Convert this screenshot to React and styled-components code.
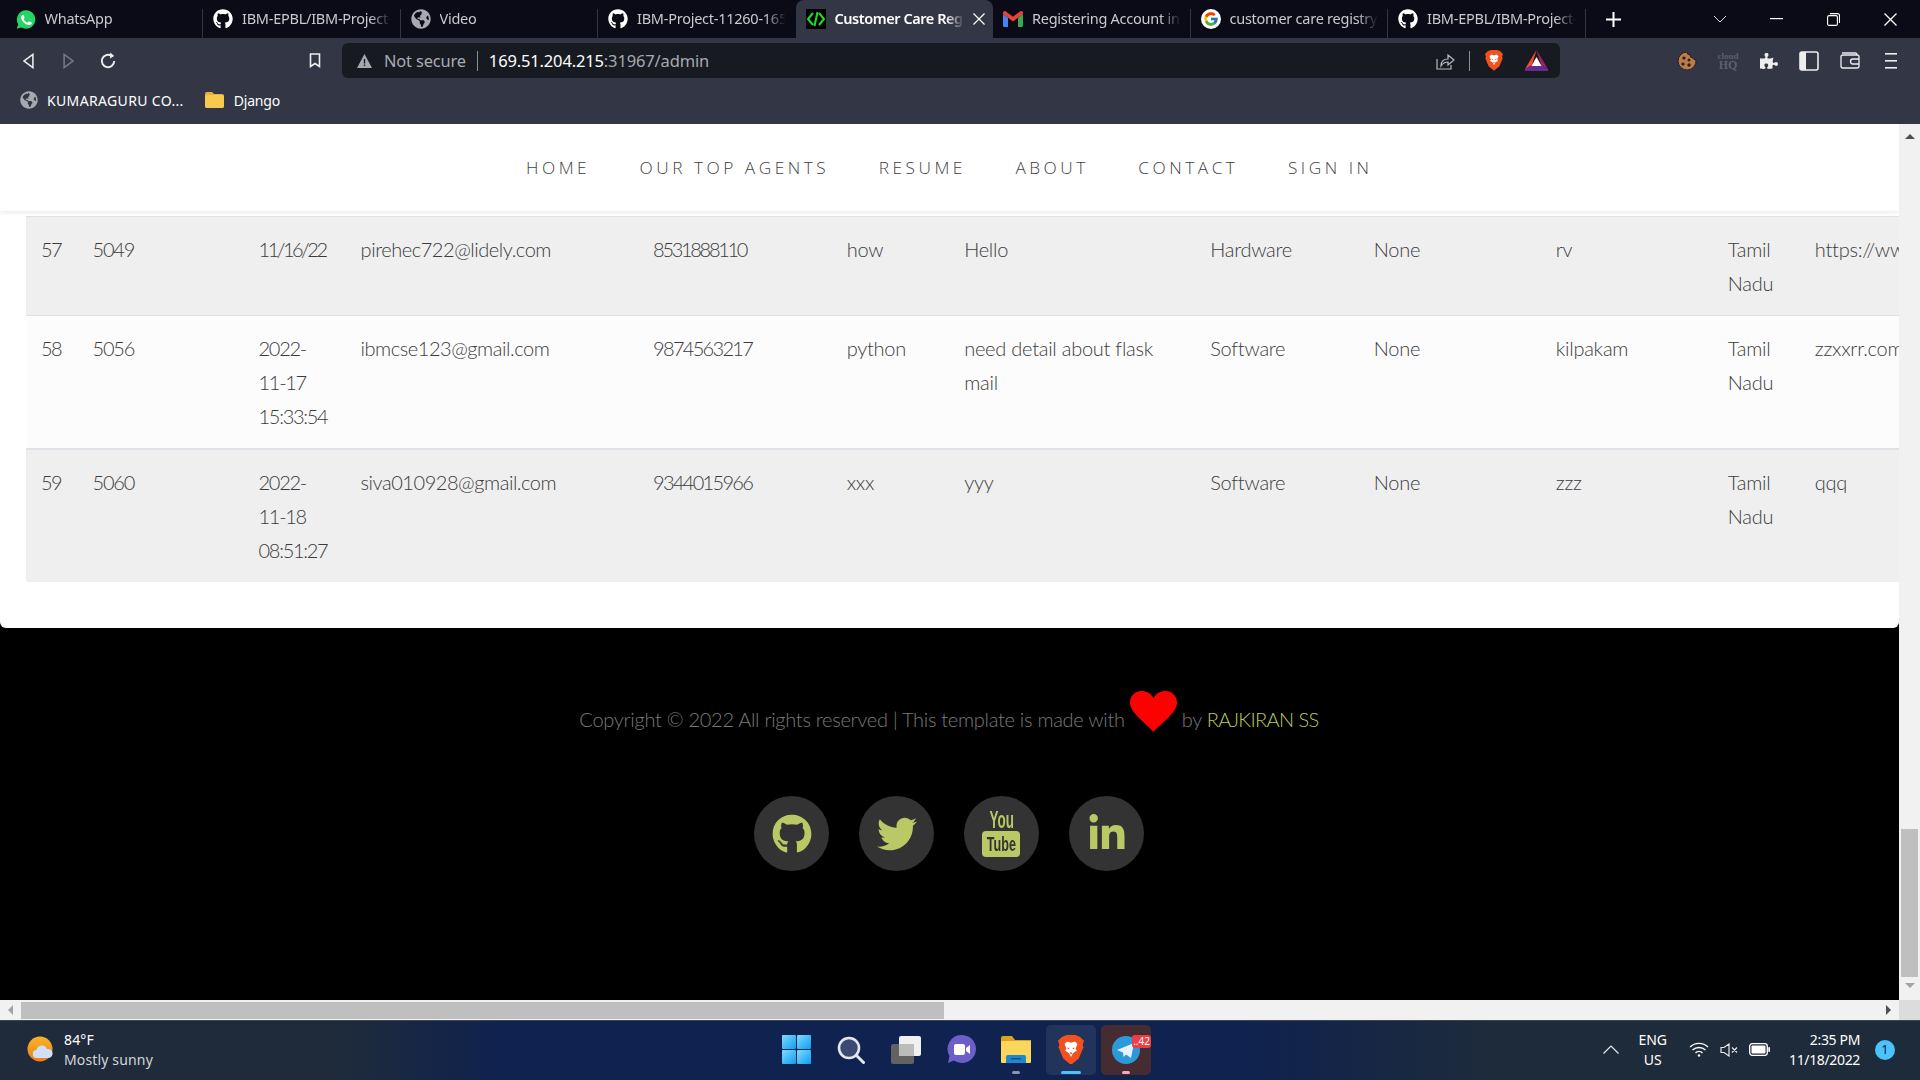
import React from "react";
import styled, { createGlobalStyle } from "styled-components";
import { FaGithub, FaGlobeAmericas, FaTwitter, FaLinkedinIn, FaPuzzlePiece } from "react-icons/fa";
import { FcGoogle } from "react-icons/fc";

const Global = createGlobalStyle`
  html, body { margin: 0; padding: 0; width: 1920px; height: 1080px; overflow: hidden; background: #000; }
  * { box-sizing: border-box; }
`;

const CHROME_FONT = `"Noto Sans", "Open Sans", sans-serif`;
const PAGE_FONT = `Lato, "Open Sans", sans-serif`;

const Screen = styled.div`
  width: 1920px; height: 1080px; display: flex; flex-direction: column; font-family: ${CHROME_FONT};
`;

const TabStrip = styled.div`
  height: 38px; flex: none; display: flex; align-items: stretch; padding-left: 5.5px; background: #0b0b17; color: #c4c7cc;
`;
const Tab = styled.div`
  position: relative; flex: 0 0 197.5px; width: 197.5px; display: flex; align-items: center; gap: 9px; padding: 0 10px;
  font-size: 14.5px; letter-spacing: ${p => (p.$active ? -0.45 : -0.25)}px; color: ${p => (p.$active ? "#fff" : "#c8cace")}; font-weight: ${p => (p.$active ? 600 : 400)};
  background: ${p => (p.$active ? "#333645" : "transparent")};
  border-radius: ${p => (p.$active ? "8px 8px 0 0" : "0")};
  &::after {
    content: ""; position: absolute; right: 0; top: 9px; bottom: 0; width: 1px;
    background: ${p => (p.$sep ? "#34353f" : "transparent")};
  }
`;
const TabIcon = styled.span`
  flex: none; width: 20px; height: 20px; display: flex; align-items: center; justify-content: center; font-size: 20px;
  color: ${p => p.$color || "#fff"};
`;
const TabTitle = styled.span`
  flex: 1; min-width: 0; overflow: hidden; white-space: nowrap; padding-bottom: 2px;
  mask-image: linear-gradient(to right, #000 86%, transparent 100%);
`;
const TabClose = styled.span`
  flex: none; width: 12px; margin-right: -2px; display: flex;
`;
const NewTab = styled.div`
  margin-left: 20px; width: 16px; display: flex; align-items: center;
`;
const WindowControls = styled.div`
  margin-left: auto; padding-right: 1px; display: flex; align-items: center; color: #fff;
`;
const WinBtn = styled.div`
  width: ${p => p.$w || 57}px; display: flex; justify-content: center;
`;

const Toolbar = styled.div`
  height: 42px; flex: none; padding: 3px 0 0 8px; display: flex; align-items: center; background: #333645;
`;
const ToolBtn = styled.div`
  flex: none; width: ${p => p.$w || 40}px; display: flex; align-items: center; justify-content: center;
  margin-left: ${p => p.$ml || 0}px; color: #eee;
`;
const AddressBar = styled.div`
  flex: none; width: 1218px; height: 35px; margin-left: 7px; border-radius: 6px; background: #181a21;
  display: flex; align-items: center; padding-left: 15px; font-size: 16.5px; letter-spacing: -0.15px; color: #a6a9b0;
`;
const NotSecure = styled.span`
  margin-left: 12px; color: #a9acb2; font-size: 16.4px;
`;
const AddrSep = styled.span`
  width: 1px; height: 20px; background: #8c8f96; margin: 0 ${p => p.$m || 11}px;
`;
const Host = styled.span`
  color: #fff;
`;
const AddrRight = styled.div`
  margin-left: auto; display: flex; align-items: center; padding-right: 12px;
`;

const Bookmarks = styled.div`
  height: 44px; flex: none; padding: 0 0 4px 19px; display: flex; align-items: center; background: #333645;
  font-size: 14px; color: #fff;
`;
const Bookmark = styled.div`
  display: flex; align-items: center; gap: ${p => p.$gap}px; margin-right: 21px; letter-spacing: ${p => p.$ls}px;
`;

const Viewport = styled.div`
  height: 876px; flex: none; display: flex;
`;
const Page = styled.div`
  width: 1899px; flex: none; display: flex; flex-direction: column; background: #000; font-family: ${PAGE_FONT}; font-weight: 300;
  overflow: hidden;
`;
const Nav = styled.nav`
  position: relative; z-index: 2; flex: none; height: 87px; background: #fff; display: flex; align-items: center;
  padding: 0 0 0 526px; box-shadow: 0 1px 5px rgba(0,0,0,.1);
`;
const NavLink = styled.a`
  font-family: "Open Sans", sans-serif; font-weight: 300; font-size: 17.3px; letter-spacing: 3.5px; color: #3f3f3f; white-space: nowrap;
  margin-right: ${p => p.$mr}px;
`;
const Card = styled.section`
  flex: none; height: 417px; background: #fff; padding: 5px 0 45px 26px; border-radius: 0 0 6px 6px; overflow: hidden;
`;
const TableWrap = styled.div`
  overflow: hidden; width: 100%;
`;
const Table = styled.table`
  table-layout: fixed; width: 2074px; border-collapse: separate; border-spacing: 0; color: #3b3b3b;
  font-size: 20px; line-height: 33.8px;
`;
const Column = styled.col`
  width: ${p => p.$w}px;
`;
const Cell = styled.td`
  vertical-align: top; padding: 16px 15px 14.5px; overflow: hidden; letter-spacing: ${p => p.$ls}px;
  background: ${p => (p.$odd ? "#efeff0" : "#fcfcfc")};
  border-top: ${p => (p.$thick ? 2 : 1)}px solid #dee2e6;
`;

const Footer = styled.footer`
  flex: 1; background: #000; display: flex; flex-direction: column; align-items: center; padding: 63px 1px 0 0;
`;
const Copy = styled.div`
  display: flex; align-items: flex-start; font-size: 20px; line-height: 34px; letter-spacing: -0.28px; color: #7a7a7a; white-space: pre;
`;
const CopyText = styled.span`
  margin-top: 11px;
`;
const Author = styled.a`
  color: #bccc58; letter-spacing: -0.6px;
`;
const Heart = styled.svg`
  width: 47px; height: 41px; margin: 0 5px; flex: none;
`;
const Socials = styled.div`
  display: flex; gap: 30px; margin-top: 60px;
`;
const Social = styled.a`
  width: 75px; height: 75px; border-radius: 50%; background: #333; color: #bac866; display: flex; align-items: center; justify-content: center;
  font-size: ${p => p.$size || 40}px;
`;
const YouTubeStack = styled.div`
  display: flex; flex-direction: column; align-items: center; gap: 2px; font-family: "Liberation Sans", sans-serif; font-weight: 700;
`;
const YouWord = styled.span`
  font-size: 24px; line-height: 18px; height: 18px; transform: scaleX(.56); letter-spacing: 0;
`;
const TubeBox = styled.span`
  width: 38px; height: 26px; border-radius: 4px; background: #bac866; color: #333; display: flex; align-items: center; justify-content: center;
`;
const TubeWord = styled.span`
  font-size: 21px; line-height: 26px; transform: scaleX(.6);
`;

const VScroll = styled.div`
  width: 21px; flex: none; background: #f1f1f1; display: flex; flex-direction: column; align-items: center; padding-top: 10px;
`;
const VThumb = styled.div`
  width: 17px; height: 148px; margin-top: 690px; background: #bfbfbf; flex: none;
`;
const ArrowUp = styled.div`
  width: 0; height: 0; border-left: 5px solid transparent; border-right: 5px solid transparent; border-bottom: 5px solid #505050;
`;
const ArrowDown = styled.div`
  width: 0; height: 0; margin-top: 6px; border-left: 5px solid transparent; border-right: 5px solid transparent; border-top: 5px solid #a3a3a3;
`;
const HScroll = styled.div`
  height: 20px; flex: none; display: flex; align-items: center; background: #f1f1f1;
`;
const HLeft = styled.div`
  width: 21px; display: flex; justify-content: center;
`;
const ArrowLeft = styled.div`
  width: 0; height: 0; border-top: 5px solid transparent; border-bottom: 5px solid transparent; border-right: 5px solid #a3a3a3;
`;
const ArrowRight = styled.div`
  width: 0; height: 0; margin: 0 8px 0 auto; border-top: 5px solid transparent; border-bottom: 5px solid transparent; border-left: 5px solid #505050;
`;
const HThumb = styled.div`
  width: 923px; height: 17px; background: #bfbfbf;
`;
const Corner = styled.div`
  width: 21px; height: 20px; background: #dcdcdc;
`;

const Taskbar = styled.div`
  height: 60px; flex: none; display: flex; align-items: center; color: #fff; font-size: 14px; border-top: 1px solid #3a4656; padding-bottom: 2px;
  background: linear-gradient(to right, #1f2b3a 0, #1f2b3a 330px, #10224f 500px, #10224f 1250px, #1e2b3a 1500px, #1e2b3a 100%);
`;
const Weather = styled.div`
  flex: none; width: 771px; display: flex; align-items: center; padding-left: 27px; gap: 9px; line-height: 20px;
`;
const WeatherText = styled.div`
  display: flex; flex-direction: column; font-size: 14px; letter-spacing: 0.15px;
`;
const Muted = styled.span`
  color: #d3d6da;
`;
const Dock = styled.div`
  flex: none; display: flex; gap: 5px;
`;
const DockItem = styled.div`
  position: relative; width: 50px; height: 50px; border-radius: 5px; display: flex; align-items: center; justify-content: center;
  background: ${p => p.$bg || "transparent"};
  &::after {
    content: ""; position: absolute; left: 50%; bottom: 1px; transform: translateX(-50%); height: 3px; border-radius: 2px;
    width: ${p => p.$barW || 0}px; background: ${p => p.$bar || "transparent"};
  }
`;
const Badge = styled.span`
  position: absolute; top: 10px; right: 0; min-width: 18px; height: 13px; border-radius: 3px; background: #ef3d45; color: #fff;
  font-size: 10px; line-height: 13px; text-align: center; padding: 0 1px;
`;
const Tray = styled.div`
  flex: 1; display: flex; align-items: center; justify-content: flex-end; padding-right: 25px;
`;
const TrayItem = styled.div`
  margin-left: ${p => p.$ml}px; display: flex; flex-direction: column; align-items: ${p => p.$align || "center"}; line-height: 20px; font-size: 14px;
  letter-spacing: ${p => p.$ls || 0}px;
`;
const Notif = styled.div`
  width: 20px; height: 20px; border-radius: 50%; margin-left: 15px; background: #4cc2ff; color: #06202f; font-size: 12px; text-align: center; line-height: 20px;
`;
const CloudHQ = styled.div`
  display: flex; flex-direction: column; align-items: center; font-family: "Liberation Serif", serif; font-weight: 700; color: #5e6069; line-height: 9px;
`;
const CloudWord = styled.span`
  font-size: 9px;
`;
const HQWord = styled.span`
  font-size: 12px;
`;
const GoogleBadge = styled.span`
  width: 20px; height: 20px; border-radius: 50%; background: #fff; display: flex; align-items: center; justify-content: center; font-size: 16px;
`;

const WhatsIcon = () => (
  <svg width="21" height="21" viewBox="0 0 24 24"><path fill="#25d366" d="M12 1a11 11 0 0 0-9.4 16.6L1 23l5.6-1.5A11 11 0 1 0 12 1z"/><path fill="#fff" d="M8.4 6.5c-.3 0-.8.1-1.1.5-.5.6-1.2 1.4-1.2 2.9 0 1.6 1.1 3.1 1.3 3.3.2.2 2.2 3.5 5.4 4.7 2.6 1 3.2.8 3.8.8.6-.1 1.9-.8 2.1-1.5.3-.8.3-1.4.2-1.5-.1-.2-.3-.2-.6-.4l-2.2-1c-.3-.1-.5-.2-.7.1l-1 1.2c-.2.2-.4.3-.7.1-.3-.2-1.4-.5-2.6-1.6-1-.8-1.6-1.9-1.8-2.2-.2-.3 0-.5.1-.6l.5-.6.3-.5c.1-.2.1-.4 0-.6L9.4 7c-.2-.5-.5-.5-.7-.5z"/></svg>
);
const CareIcon = () => (
  <svg width="20" height="20" viewBox="0 0 20 20"><rect width="20" height="20" fill="#000"/><path d="M7 4 2 10l5 6M13 4l5 6-5 6M11.5 3 8.5 17" stroke="#1fe01f" strokeWidth="2" fill="none"/></svg>
);
const GmailIcon = () => (
  <svg width="20" height="16" viewBox="0 0 20 16"><path fill="#4285f4" d="M0 3v11.5A1.5 1.5 0 0 0 1.5 16H5V7z"/><path fill="#34a853" d="M15 16h3.5a1.5 1.5 0 0 0 1.5-1.5V3l-5 4z"/><path fill="#ea4335" d="M5 7 0 3V1.8C0 .3 1.7-.5 2.9.4L10 5.8 17.1.4C18.3-.5 20 .3 20 1.8V3l-5 4v-.2l-5 3.8-5-3.8z"/></svg>
);
const BraveIcon = ({ size = 20 }) => (
  <svg width={size} height={size * 1.15} viewBox="0 0 20 23">
    <path fill="#f1511f" d="M3 1.5 6.5 0h7L17 1.5l3 3-1 3 .6 2L16 18l-6 5-6-5-3.6-8.5.6-2-1-3z"/>
    <path fill="#fff" d="M5 7 7 5l3 1 3-1 2 2-1.5 3.5 1 1.5-3 2-1.5 3-1.500-3-3-2 1-1.500z"/>
    <path fill="#f1511f" d="M7.500 9.500 9 10.500 7.500 11zM12.500 9.500 11 10.500l1.500.5zM9 14l1-1 1 1-1 1z"/>
  </svg>
);
const BatIcon = () => (
  <svg width="23" height="21" viewBox="0 0 23 21"><polygon points="11.5,0 23,19 16,15" fill="#9e1f63"/><polygon points="11.5,0 0,19 7,15" fill="#ff4724"/><polygon points="0,19 23,19 16,15 7,15" fill="#662d91"/><polygon points="0,19 23,19 23,21 0,21" fill="#662d91"/><polygon points="11.5,7 6.5,16 16.5,16" fill="#fff"/></svg>
);
const Cookie = () => (
  <svg width="20" height="20" viewBox="0 0 20 20"><path d="M10 1a3 3 0 0 0 3 3 3 3 0 0 0 3 3 3 3 0 0 0 3 2 9 9 0 1 1-9-8z" fill="#bf7a4a" stroke="#2b2018" strokeWidth="1"/><circle cx="7" cy="7" r="1.600" fill="#221"/><circle cx="12" cy="9" r="1.500" fill="#221"/><circle cx="6" cy="13" r="1.600" fill="#221"/><circle cx="12" cy="14" r="1.700" fill="#221"/></svg>
);
const SidebarIcon = () => (
  <svg width="20" height="20" viewBox="0 0 20 20"><rect x="1" y="1" width="18" height="18" rx="2" fill="none" stroke="#eee" strokeWidth="1.600"/><rect x="1" y="1" width="6" height="18" fill="#eee"/></svg>
);
const WalletIcon = () => (
  <svg width="20" height="17" viewBox="0 0 20 17" fill="none" stroke="#eee" strokeWidth="1.300"><path d="M2 1h13a2 2 0 0 1 2 2H3a2 2 0 0 0-2 2v9a2 2 0 0 0 2 2h14a2 2 0 0 0 2-2V5a2 2 0 0 0-2-2"/><path d="M19 7h-6a2 2 0 0 0 0 5h6"/></svg>
);
const MenuIcon = () => (
  <svg width="12" height="16" viewBox="0 0 12 16" fill="#eee"><rect width="12" height="1.600"/><rect y="7" width="12" height="1.600"/><rect y="14" width="12" height="1.600"/></svg>
);
const BackIcon = ({ dim, flip }) => (
  <svg width="11" height="16" viewBox="0 0 10 14" fill="none" stroke={dim ? "#777a85" : "#eee"} strokeWidth="1.400" transform={flip ? "scale(-1 1)" : undefined}><path d="M9 1v12L1 7z"/></svg>
);
const ReloadIcon = () => (
  <svg width="18" height="18" viewBox="0 0 16 16" fill="none" stroke="#eee" strokeWidth="1.700"><path d="M13.500 8A5.500 5.500 0 1 1 11 3.400"/><path d="M10 .5 13.500 3.600 9.800 5.800" fill="#eee" stroke="none"/></svg>
);
const BookmarkIcon = () => (
  <svg width="12" height="15" viewBox="0 0 12 15" fill="none" stroke="#eee" strokeWidth="1.600"><path d="M1.500 1h9v12.500L6 10.500l-4.500 3z"/></svg>
);
const WarnIcon = () => (
  <svg width="15" height="14" viewBox="0 0 15 14"><path fill="#a6a9b0" d="M7.500 0 15 14H0z"/><rect x="6.800" y="5" width="1.400" height="4.500" fill="#181a21"/><rect x="6.800" y="10.500" width="1.400" height="1.500" fill="#181a21"/></svg>
);
const ShareIcon = () => (
  <svg width="19" height="18" viewBox="0 0 19 18" fill="none" stroke="#b8bac0" strokeWidth="1.200"><path d="M1 7v10h14v-4"/><path d="M5 14c0-5 3-7 7-7V3l6 5-6 5V10c-3 0-5 1-7 4z"/></svg>
);
const HeartShape = () => (
  <Heart viewBox="0 0 47 41"><path fill="#f00" d="M23.500 41C17 33 0 22 0 11.500 0 4.500 5.500 0 11.500 0c5 0 9.500 2.500 12 7 2.500-4.500 7-7 12-7C41.500 0 47 4.500 47 11.500 47 22 30 33 23.500 41z"/></Heart>
);
const WeatherIcon = () => (
  <svg width="28" height="27" viewBox="0 0 28 27"><defs><linearGradient id="sun" x1="0" y1="0" x2="0" y2="1"><stop offset="0" stopColor="#f8b52a"/><stop offset="1" stopColor="#ed7d13"/></linearGradient></defs><circle cx="13" cy="13" r="12.500" fill="url(#sun)"/><path fill="#cfe0f7" d="M10 22a4 4 0 0 1-.5-8 5.500 5.500 0 0 1 10.500-1 4.500 4.500 0 0 1 2 9z"/></svg>
);
const WinLogo = () => (
  <svg width="29" height="29" viewBox="0 0 29 29"><defs><linearGradient id="win" x1="0" y1="0" x2="1" y2="1"><stop offset="0" stopColor="#7fdcff"/><stop offset="1" stopColor="#0f9cf0"/></linearGradient></defs><rect width="14" height="14" rx="1" fill="url(#win)"/><rect x="15" width="14" height="14" rx="1" fill="url(#win)"/><rect y="15" width="14" height="14" rx="1" fill="url(#win)"/><rect x="15" y="15" width="14" height="14" rx="1" fill="url(#win)"/></svg>
);
const SearchIcon = () => (
  <svg width="28" height="28" viewBox="0 0 28 28" fill="none"><circle cx="12" cy="12" r="10" fill="#3a4a72" stroke="#e4e7ea" strokeWidth="2.600"/><path d="M19.500 19.500 26.500 26.500" stroke="#e4e7ea" strokeWidth="3" strokeLinecap="round"/></svg>
);
const TaskView = () => (
  <svg width="30" height="28" viewBox="0 0 30 28"><rect y="8" width="23" height="20" rx="2" fill="#626262"/><rect x="8" width="22" height="20" rx="2" fill="#f0f0f0"/><rect x="8" y="8" width="15" height="12" fill="#bcbcbc"/></svg>
);
const TeamsIcon = () => (
  <svg width="29" height="29" viewBox="0 0 29 29"><path fill="#6c5fc7" d="M15 0a14 14 0 1 1-8 25.500L1 28l1.500-7A14 14 0 0 1 15 0z"/><rect x="7" y="9" width="11" height="11" rx="2" fill="#fff"/><path fill="#fff" d="m19 13 4-3v9l-4-3z"/></svg>
);
const ExplorerIcon = () => (
  <svg width="30" height="27" viewBox="0 0 30 27"><path fill="#d9a41a" d="M0 2a2 2 0 0 1 2-2h9l3 4h16v6H0z"/><rect y="5" width="30" height="22" rx="1" fill="#fbd75b"/><path fill="#1f87d0" d="M5 21a2 2 0 0 1 2-2h16a2 2 0 0 1 2 2v6H5z"/><rect x="10" y="22" width="10" height="1.400" fill="#0c4f8c"/></svg>
);
const ChevronUp = () => (
  <svg width="16" height="9" viewBox="0 0 16 9" fill="none" stroke="#e7e9ea" strokeWidth="1.200"><path d="M.5 8.500 8 1l7.500 7.500"/></svg>
);
const Wifi = () => (
  <svg width="20" height="15" viewBox="0 0 20 15" fill="none" stroke="#fff" strokeWidth="1.400"><path d="M1 5a13 13 0 0 1 18 0M3.500 8a9.500 9.500 0 0 1 13 0M6.500 11a5 5 0 0 1 7 0"/><circle cx="10" cy="13.500" r="1.200" fill="#fff" stroke="none"/></svg>
);
const Muted2 = () => (
  <svg width="19" height="14" viewBox="0 0 19 14" fill="none" stroke="#e7e9ea" strokeWidth="1.200"><path d="M1 4.500h3L9 1v12L4 9.500H1zM12 4.500l5 5M17 4.500l-5 5"/></svg>
);
const Battery = () => (
  <svg width="21" height="13" viewBox="0 0 21 13"><rect x=".7" y=".7" width="17.600" height="11.600" rx="2.500" fill="none" stroke="#fff" strokeWidth="1.300"/><rect x="2.500" y="2.500" width="14" height="8" rx="1" fill="#fff"/><rect x="19.300" y="4" width="1.700" height="5" rx=".8" fill="#fff"/></svg>
);
const Chev = () => (<svg width="14" height="8" viewBox="0 0 14 8" fill="none" stroke="#ddd" strokeWidth="1"><path d="m1 1 6 6 6-6"/></svg>);
const MinI = () => (<svg width="13" height="2" viewBox="0 0 13 2"><rect width="13" height="1.200" fill="#fff"/></svg>);
const RestoreI = () => (<svg width="13" height="13" viewBox="0 0 13 13" fill="none" stroke="#fff" strokeWidth="1.100"><rect x=".6" y="2.600" width="9.800" height="9.800" rx="1.500"/><path d="M3 .6h7.500a2 2 0 0 1 2 2V10"/></svg>);
const CloseI = ({ s = 13, c = "#fff" }) => (<svg width={s} height={s} viewBox="0 0 13 13" stroke={c} strokeWidth="1.300"><path d="m.5.500 12 12M12.500.500l-12 12"/></svg>);
const PlusI = () => (<svg width="15" height="15" viewBox="0 0 15 15" fill="#fff"><rect y="6.500" width="15" height="2"/><rect x="6.500" width="2" height="15"/></svg>);

const tabs = [
  { title: "WhatsApp", icon: <WhatsIcon />, sep: true },
  { title: "IBM-EPBL/IBM-Project-", icon: <FaGithub />, sep: true },
  { title: "Video", icon: <FaGlobeAmericas />, color: "#a6a9b0", sep: true },
  { title: "IBM-Project-11260-1659", icon: <FaGithub /> },
  { title: "Customer Care Registry", icon: <CareIcon />, active: true },
  { title: "Registering Account in", icon: <GmailIcon />, sep: true },
  { title: "customer care registry", icon: <GoogleBadge><FcGoogle /></GoogleBadge>, sep: true },
  { title: "IBM-EPBL/IBM-Project-", icon: <FaGithub />, sep: true },
];

const columns = [51.5, 166, 102, 292.5, 193.5, 117.5, 246, 163.5, 182, 172, 87, 300];
/* Per-column tracking; figures in the page's face are set tighter than the body copy. */
const columnSpacing = [-1.6, -1.2, -1.3, -0.45, -1.7, -0.25, -0.25, -0.25, -0.25, -0.25, -0.25, -0.25];
const tightCells = { "11/16/22": -2.5, "8531888110": -2.3 };
const rows = [
  { odd: true, cells: ["57", "5049", "11/16/22", "pirehec722@lidely.com", "8531888110", "how", "Hello", "Hardware", "None", "rv", "Tamil Nadu", "https://www.google.com"] },
  { cells: ["58", "5056", "2022-11-17 15:33:54", "ibmcse123@gmail.com", "9874563217", "python", "need detail about flask mail", "Software", "None", "kilpakam", "Tamil Nadu", "zzxxrr.com"] },
  { odd: true, thick: true, cells: ["59", "5060", "2022-11-18 08:51:27", "siva010928@gmail.com", "9344015966", "xxx", "yyy", "Software", "None", "zzz", "Tamil Nadu", "qqq"] },
];
const navLinks = [["HOME", 49.5], ["OUR TOP AGENTS", 49.5], ["RESUME", 49.5], ["ABOUT", 49.5], ["CONTACT", 49.5], ["SIGN IN", 0]];

export default function App() {
  return (
    <Screen>
      <Global />
      <TabStrip>
        {tabs.map((t, i) => (
          <Tab key={i} $active={t.active} $sep={t.sep}>
            <TabIcon $color={t.color}>{t.icon}</TabIcon>
            <TabTitle>{t.title}</TabTitle>
            {t.active && <TabClose><CloseI s={12} /></TabClose>}
          </Tab>
        ))}
        <NewTab><PlusI /></NewTab>
        <WindowControls>
          <WinBtn><Chev /></WinBtn>
          <WinBtn><MinI /></WinBtn>
          <WinBtn><RestoreI /></WinBtn>
          <WinBtn><CloseI /></WinBtn>
        </WindowControls>
      </TabStrip>
      <Toolbar>
        <ToolBtn><BackIcon /></ToolBtn>
        <ToolBtn><BackIcon dim flip /></ToolBtn>
        <ToolBtn><ReloadIcon /></ToolBtn>
        <ToolBtn $ml={167}><BookmarkIcon /></ToolBtn>
        <AddressBar>
          <WarnIcon />
          <NotSecure>Not secure</NotSecure>
          <AddrSep />
          <span><Host>169.51.204.215</Host>:31967/admin</span>
          <AddrRight>
            <ToolBtn $w={20}><ShareIcon /></ToolBtn>
            <AddrSep $m={14} />
            <ToolBtn $w={20}><BraveIcon size={18} /></ToolBtn>
            <ToolBtn $w={24} $ml={20}><BatIcon /></ToolBtn>
          </AddrRight>
        </AddressBar>
        <ToolBtn $ml={107} $w={40.7}><Cookie /></ToolBtn>
        <ToolBtn $w={40.7}><CloudHQ><CloudWord>cloud</CloudWord><HQWord>HQ</HQWord></CloudHQ></ToolBtn>
        <ToolBtn $w={40.7}><FaPuzzlePiece size={18} /></ToolBtn>
        <ToolBtn $w={40.7}><SidebarIcon /></ToolBtn>
        <ToolBtn $w={40.7}><WalletIcon /></ToolBtn>
        <ToolBtn $w={40.7}><MenuIcon /></ToolBtn>
      </Toolbar>
      <Bookmarks>
        <Bookmark $gap={8} $ls={0.35}><TabIcon $color="#a6a9b0"><FaGlobeAmericas size={18} /></TabIcon>KUMARAGURU CO...</Bookmark>
        <Bookmark $gap={10} $ls={-0.2}>
          <svg width="19" height="16" viewBox="0 0 19 16"><path fill="#e3b341" d="M0 2a2 2 0 0 1 2-2h5l2 2h8a2 2 0 0 1 2 2v10a2 2 0 0 1-2 2H2a2 2 0 0 1-2-2z"/><rect y="3" width="19" height="13" rx="2" fill="#f6c94f"/></svg>
          Django
        </Bookmark>
      </Bookmarks>
      <Viewport>
        <Page>
          <Nav>
            {navLinks.map(([l, mr]) => <NavLink key={l} $mr={mr}>{l}</NavLink>)}
          </Nav>
          <Card>
            <TableWrap>
              <Table>
                <colgroup>{columns.map((w, i) => <Column key={i} $w={w} />)}</colgroup>
                <tbody>
                  {rows.map(r => (
                    <tr key={r.cells[0]}>
                      {r.cells.map((c, i) => (
                        <Cell key={i} $odd={r.odd} $thick={r.thick} $ls={tightCells[c] ?? columnSpacing[i]}>{c}</Cell>
                      ))}
                    </tr>
                  ))}
                </tbody>
              </Table>
            </TableWrap>
          </Card>
          <Footer>
            <Copy>
              <CopyText>Copyright © 2022 All rights reserved | This template is made with</CopyText>
              <HeartShape />
              <CopyText>by <Author>RAJKIRAN SS</Author></CopyText>
            </Copy>
            <Socials>
              <Social><FaGithub /></Social>
              <Social><FaTwitter /></Social>
              <Social>
                <YouTubeStack>
                  <YouWord>You</YouWord>
                  <TubeBox><TubeWord>Tube</TubeWord></TubeBox>
                </YouTubeStack>
              </Social>
              <Social><FaLinkedinIn /></Social>
            </Socials>
          </Footer>
        </Page>
        <VScroll>
          <ArrowUp />
          <VThumb />
          <ArrowDown />
        </VScroll>
      </Viewport>
      <HScroll>
        <HLeft><ArrowLeft /></HLeft>
        <HThumb />
        <ArrowRight />
        <Corner />
      </HScroll>
      <Taskbar>
        <Weather>
          <WeatherIcon />
          <WeatherText><span>84°F</span><Muted>Mostly sunny</Muted></WeatherText>
        </Weather>
        <Dock>
          <DockItem><WinLogo /></DockItem>
          <DockItem><SearchIcon /></DockItem>
          <DockItem><TaskView /></DockItem>
          <DockItem><TeamsIcon /></DockItem>
          <DockItem $bar="#8d93a3" $barW={8}><ExplorerIcon /></DockItem>
          <DockItem $bg="rgba(255,255,255,.08)" $bar="#4cc2ff" $barW={20}><BraveIcon size={26} /></DockItem>
          <DockItem $bg="#452c30" $bar="#ffa4b0" $barW={8}>
            <svg width="28" height="28" viewBox="0 0 28 28"><circle cx="14" cy="14" r="14" fill="#2a9bd8"/><path fill="#e6f3fb" d="M5 14 22 7l-3 15-5-3.500-2.500 2.500-.5-4.500z"/></svg>
            <Badge>..42</Badge>
          </DockItem>
        </Dock>
        <Tray>
          <TrayItem $ml={0}><ChevronUp /></TrayItem>
          <TrayItem $ml={19}><span>ENG</span><span>US</span></TrayItem>
          <TrayItem $ml={22}><Wifi /></TrayItem>
          <TrayItem $ml={11}><Muted2 /></TrayItem>
          <TrayItem $ml={10}><Battery /></TrayItem>
          <TrayItem $ml={19} $align="flex-end" $ls={-0.35}><span>2:35 PM</span><span>11/18/2022</span></TrayItem>
          <Notif>1</Notif>
        </Tray>
      </Taskbar>
    </Screen>
  );
}
